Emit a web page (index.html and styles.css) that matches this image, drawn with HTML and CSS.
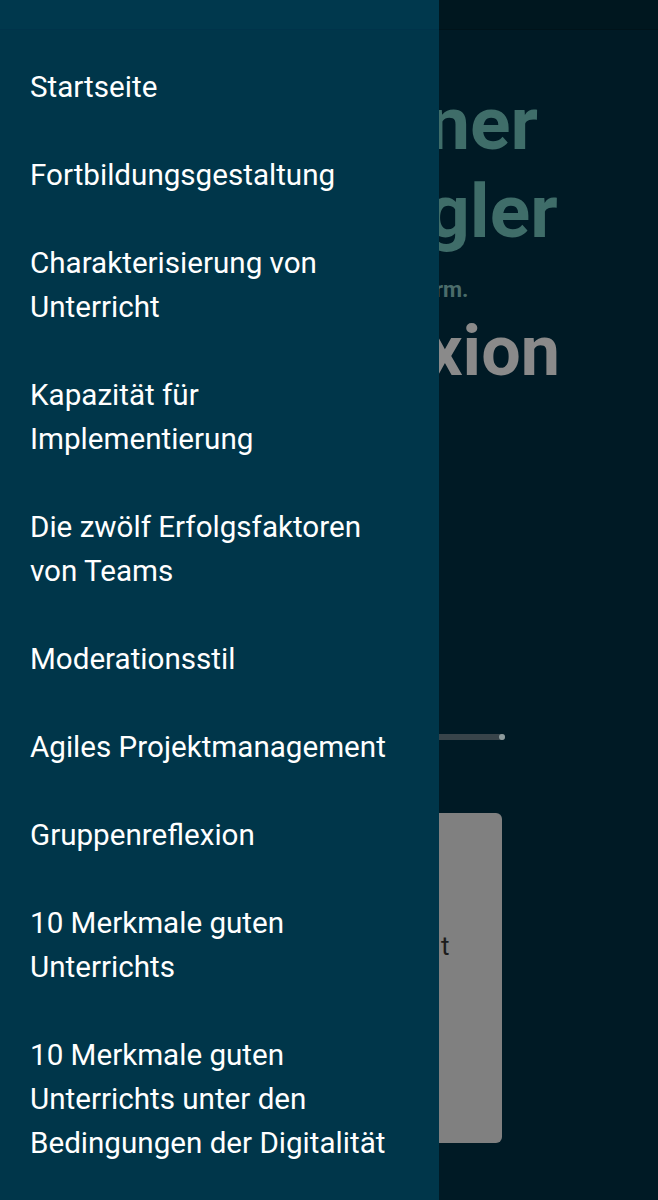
FILE: index.html
```html
<!DOCTYPE html>
<html lang="de">
<head>
<meta charset="utf-8">
<title>Menü</title>
<link rel="stylesheet" href="styles.css">
</head>
<body>
<div class="app">
  <nav class="drawer">
    <div class="drawer-top"></div>
    <ul class="menu">
      <li class="item">Startseite</li>
      <li class="item">Fortbildungsgestaltung</li>
      <li class="item">Charakterisierung von Unterricht</li>
      <li class="item">Kapazität für Implementierung</li>
      <li class="item">Die zwölf Erfolgsfaktoren von Teams</li>
      <li class="item">Moderationsstil</li>
      <li class="item">Agiles Projektmanagement</li>
      <li class="item">Gruppenreflexion</li>
      <li class="item">10 Merkmale guten Unterrichts</li>
      <li class="item">10 Merkmale guten Unterrichts unter den Bedingungen der Digitalität</li>
    </ul>
  </nav>
  <div class="page">
    <header class="topbar"></header>
    <main class="content">
      <h1 class="title">
        <span class="line l1">ner</span>
        <span class="line l2">gler</span>
      </h1>
      <p class="tagline">rm.</p>
      <h2 class="subtitle">xion</h2>
      <div class="slider"><span class="slider-knob"></span></div>
      <div class="card"><span class="card-text">t</span></div>
    </main>
  </div>
</div>
</body>
</html>
```
FILE: styles.css
```css
* { box-sizing: border-box; }
html, body {
  margin: 0;
  padding: 0;
}
body {
  background: #001a25;
  font-family: Roboto, "Noto Sans", sans-serif;
  overflow: hidden;
}
.app {
  display: flex;
  width: 658px;
  height: 1200px;
}
.drawer {
  flex: 0 0 439px;
  height: 1200px;
  background: #00364a;
}
.drawer-top {
  height: 30px;
  background: #00384d;
  border-bottom: 1px solid #00334a;
}
.menu {
  list-style: none;
  margin: 0;
  padding: 13px 0 0;
}
.item {
  padding: 22px 40px 22px 30px;
  font-size: 29.6px;
  line-height: 44px;
  color: #ffffff;
}
.page {
  flex: 1 1 auto;
  min-width: 0;
  overflow: hidden;
  background: #001a25;
}
.topbar {
  height: 30px;
  background: #00171f;
  border-bottom: 1px solid #00131a;
}
.content {
  display: flex;
  flex-direction: column;
  align-items: flex-start;
  padding-top: 49px;
}
.title {
  margin: 0;
  display: flex;
  flex-direction: column;
  font-weight: 700;
  font-size: 75px;
  line-height: 88px;
  color: #3f6d69;
}
.line { display: block; white-space: nowrap; }
.l1 { margin-left: -11px; }
.l2 { margin-left: -12px; }
.tagline {
  margin: 20px 0 0 -4px;
  font-weight: 700;
  font-size: 22px;
  line-height: 30px;
  color: #4b6c6a;
  white-space: nowrap;
}
.subtitle {
  margin: 4px 0 0 -12px;
  font-weight: 700;
  font-size: 70px;
  line-height: 84px;
  color: #8a8a8a;
  white-space: nowrap;
}
.slider {
  margin-top: 341px;
  margin-left: -10px;
  width: 76px;
  height: 6px;
  border-radius: 3px;
  background: #38444a;
  position: relative;
}
.slider-knob {
  position: absolute;
  right: 0;
  top: 0;
  width: 6px;
  height: 6px;
  border-radius: 50%;
  background: #8c9a9c;
}
.card {
  margin-top: 73px;
  margin-left: -10px;
  width: 73px;
  height: 330px;
  border-radius: 6px;
  background: #808080;
  padding: 118px 0 0 12px;
}
.card-text {
  font-size: 26px;
  line-height: 30px;
  color: #1c1c1c;
}
```
